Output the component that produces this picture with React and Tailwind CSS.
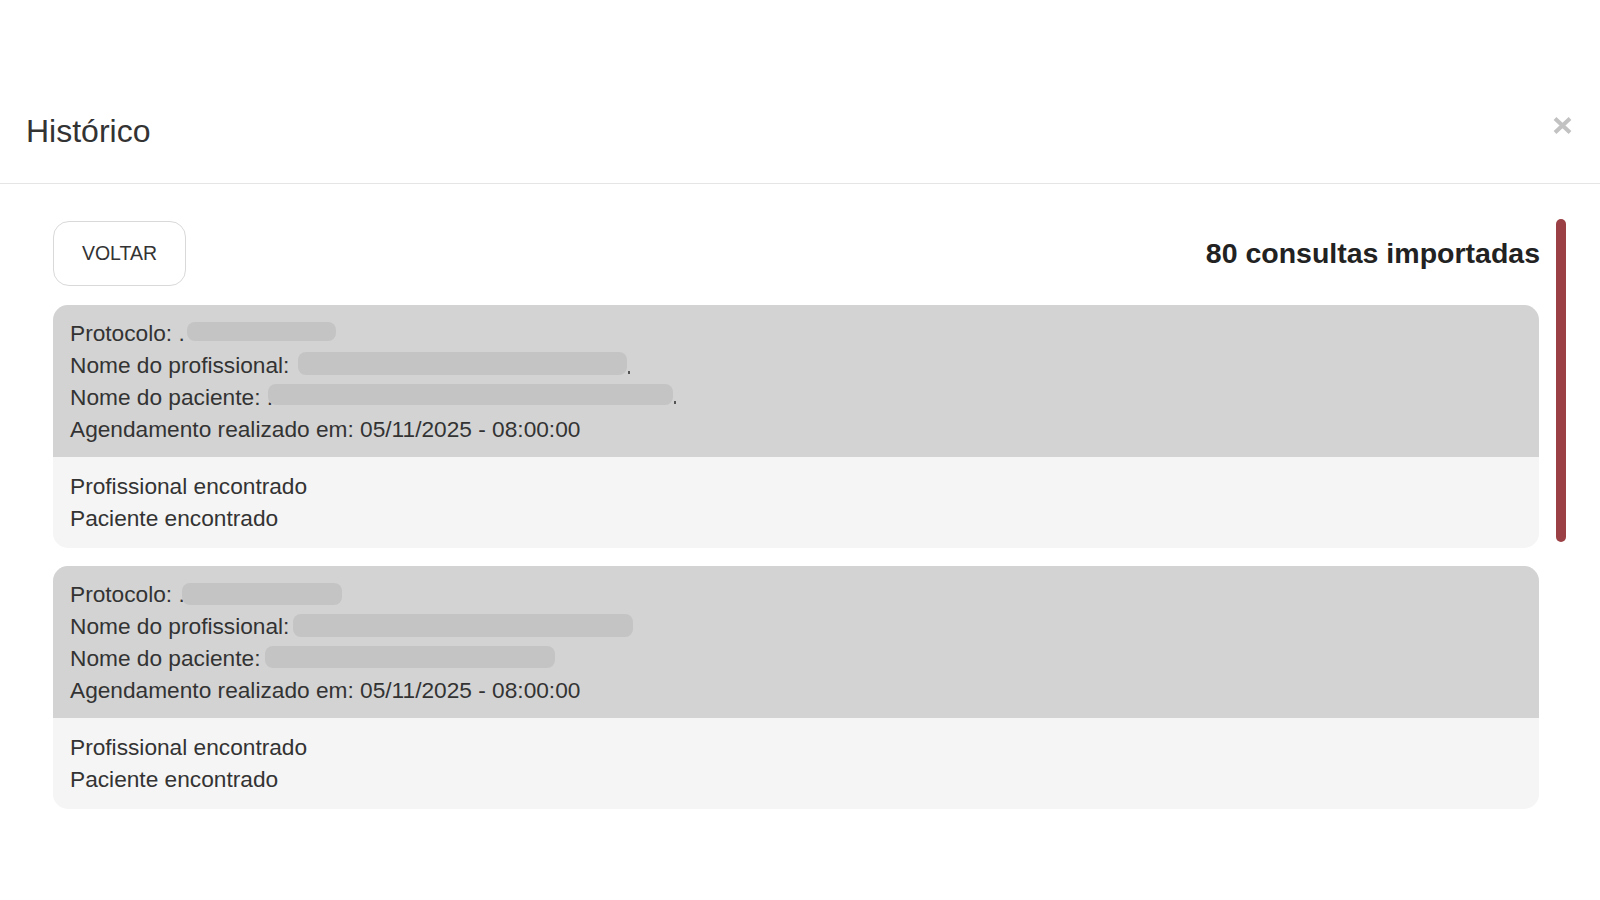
import React from "react";

const cards = [
  {
    protocolo: { left: 117, top: 5, w: 149, h: 19 },
    profissional: { left: 228, top: 3, w: 329, h: 23, dot: true },
    paciente: { left: 198, top: 3, w: 405, h: 21, dot: true },
  },
  {
    protocolo: { left: 112, top: 5, w: 160, h: 22 },
    profissional: { left: 223, top: 4, w: 340, h: 23 },
    paciente: { left: 195, top: 4, w: 290, h: 22 },
  },
];

function Blur({ b }) {
  return (
    <>
      <span
        className="absolute rounded-[8px] bg-[#c4c4c4]"
        style={{ left: b.left, top: b.top, width: b.w, height: b.h }}
      ></span>
      {b.dot && (
        <span
          className="absolute h-[3px] w-[2px] bg-[#555]"
          style={{ left: b.left + b.w + 1, top: b.top + b.h - 4 }}
        ></span>
      )}
    </>
  );
}

function Card({ c }) {
  return (
    <div className="rounded-[15px] overflow-hidden bg-[#f5f5f5] text-[22.7px] leading-[32px] text-[#333]">
      <div className="bg-[#d3d3d3] px-[17px] py-[12px]">
        <div className="relative">
          Protocolo: .
          <Blur b={c.protocolo} />
        </div>
        <div className="relative">
          Nome do profissional:
          <Blur b={c.profissional} />
        </div>
        <div className="relative">
          Nome do paciente: .
          <Blur b={c.paciente} />
        </div>
        <div>Agendamento realizado em: 05/11/2025 - 08:00:00</div>
      </div>
      <div className="px-[17px] pt-[13px] pb-[14px]">
        <div>Profissional encontrado</div>
        <div>Paciente encontrado</div>
      </div>
    </div>
  );
}

export default function App() {
  return (
    <div className="min-h-screen bg-white pt-[90px] font-['Liberation_Sans',Arial,sans-serif]">
      <div className="bg-white">
        <div className="flex justify-between items-start border-b border-[#e5e5e5] pl-[26px] pr-[28px] pt-[23px] pb-[34px]">
          <h1 className="text-[32px] leading-[36px] text-[#333]">Histórico</h1>
          <button className="mt-[4px]">
            <svg width="19" height="17" viewBox="0 0 19 17">
              <path d="M2 1.5 L17 15.5 M17 1.5 L2 15.5" stroke="#c2c2c2" strokeWidth="4" />
            </svg>
          </button>
        </div>
        <div className="flex pl-[53px] pt-[35px]">
          <div className="w-[1486px] pt-[2px] flex flex-col">
            <div className="flex items-center justify-between">
              <button className="w-[133px] h-[65px] rounded-[16px] border border-[#d9d9d9] bg-white text-[19.5px] text-[#333]">
                VOLTAR
              </button>
              <div className="text-[28.5px] font-bold text-[#222] -mr-[1px]">80 consultas importadas</div>
            </div>
            <div className="mt-[19px] flex flex-col gap-[18px]">
              {cards.map((c, i) => (
                <Card key={i} c={c} />
              ))}
            </div>
          </div>
          <div className="ml-[17px] w-[10px] h-[323px] rounded-full bg-[#9b4045]"></div>
        </div>
      </div>
    </div>
  );
}
